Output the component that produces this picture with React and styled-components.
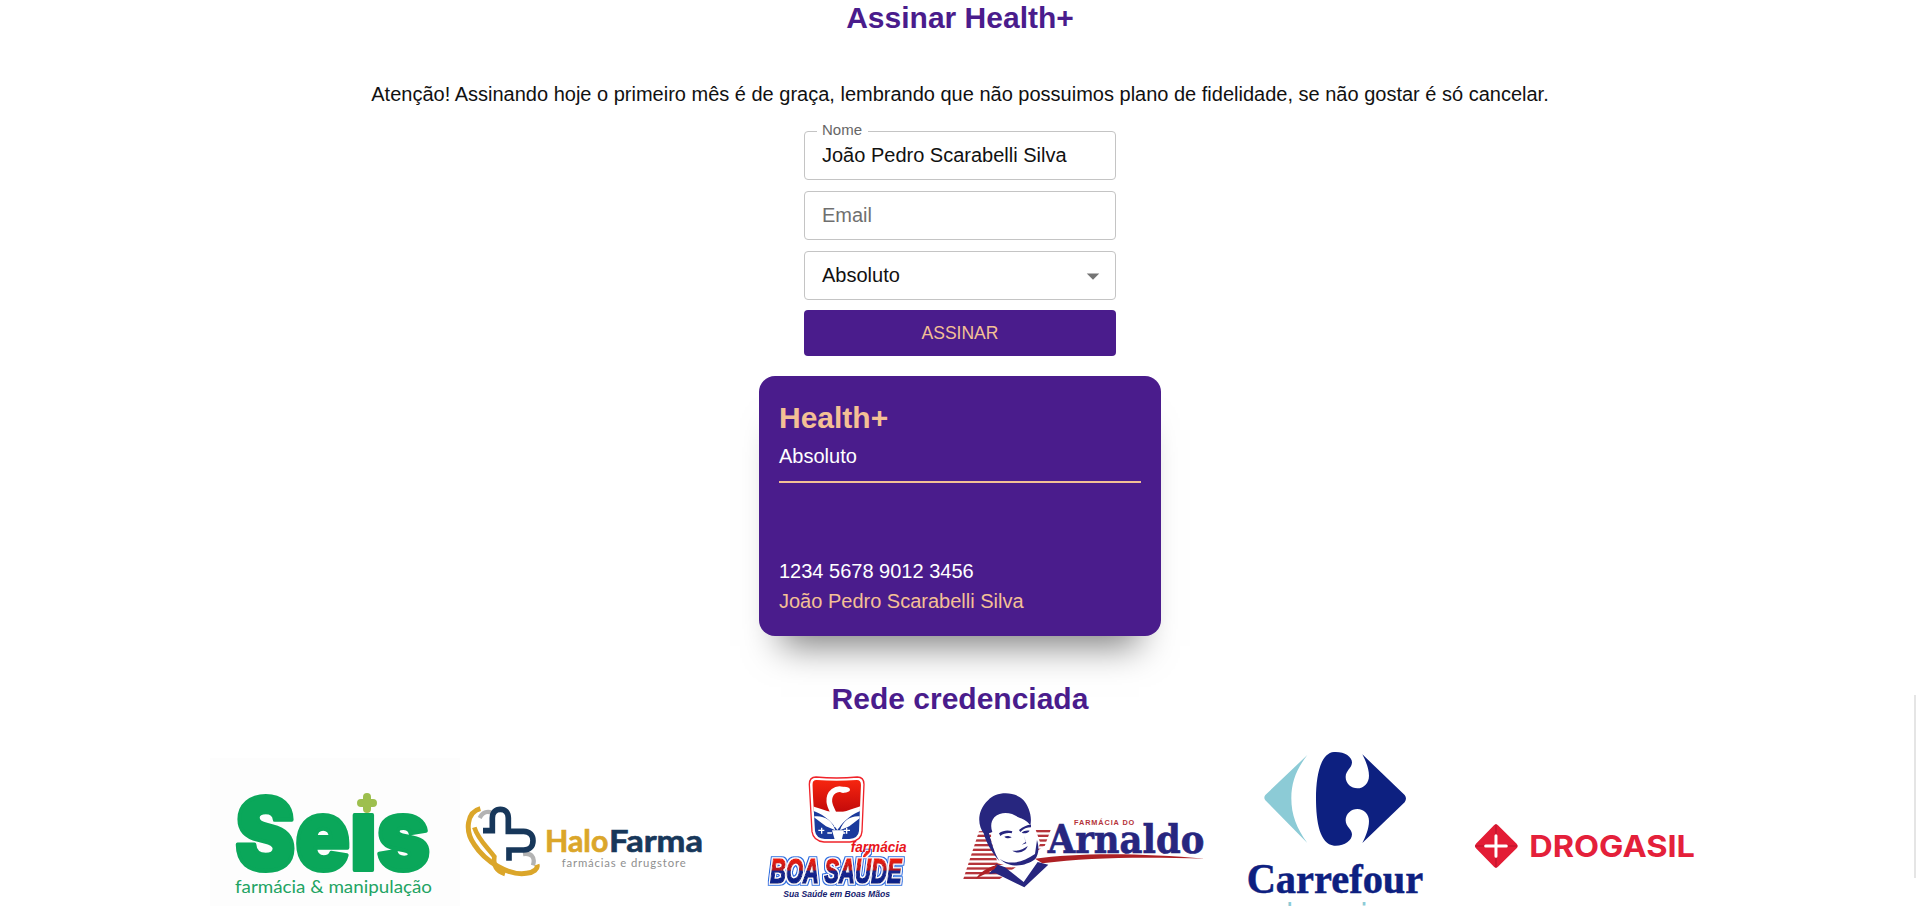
import React from "react";
import styled, { createGlobalStyle } from "styled-components";

const purple = "#4a1c8c";
const peach = "#f4c095";

const GlobalStyle = createGlobalStyle`
  html, body {
    margin: 0;
    height: 100%;
    overflow: hidden;
    background: #fff;
    font-family: "Liberation Sans", Arial, sans-serif;
    color: #111;
  }
`;

const Page = styled.main`
  display: flex;
  flex-direction: column;
  align-items: center;
  height: 906px;
  overflow: hidden;
`;

const Title = styled.h2`
  margin: ${(p) => p.$top || 0}px 0 0;
  font-size: 30px;
  line-height: 36px;
  font-weight: 700;
  color: ${purple};
`;

const Notice = styled.p`
  margin: 47px 0 0;
  font-size: 20px;
  line-height: 23px;
`;

const Form = styled.form`
  display: flex;
  flex-direction: column;
  gap: 11px;
  width: 312px;
  margin-top: 25px;
`;

const FieldBox = styled.div`
  position: relative;
  display: flex;
  align-items: center;
  justify-content: space-between;
  box-sizing: border-box;
  height: 49px;
  padding: 0 16px 0 17px;
  border: 1px solid #c4c4c4;
  border-radius: 4px;
  font-size: 20px;
`;

const FieldLabel = styled.label`
  position: absolute;
  top: -11px;
  left: 12px;
  padding: 0 6px 0 5px;
  background: #fff;
  font-size: 15px;
  line-height: 17px;
  color: #666;
`;

const Input = styled.input`
  width: 100%;
  padding: 0;
  border: 0;
  outline: 0;
  background: transparent;
  font: inherit;
  color: #111;

  &::placeholder {
    color: #6f6f6f;
    opacity: 1;
  }
`;

const DropIcon = styled.svg`
  flex: none;
  width: 30px;
  height: 30px;
  margin-right: -9px;
`;

const Submit = styled.button`
  height: 46px;
  margin-top: -1px;
  border: 0;
  border-radius: 4px;
  background: ${purple};
  color: ${peach};
  font-family: inherit;
  font-size: 17.5px;
  text-transform: uppercase;
`;

const Card = styled.section`
  display: flex;
  flex-direction: column;
  box-sizing: border-box;
  width: 402px;
  height: 260px;
  margin-top: 20px;
  padding: 25px 20px 23px;
  border-radius: 16px;
  background: ${purple};
  box-shadow: 0 32px 34px -22px rgba(0, 0, 0, 0.5);
`;

const CardBrand = styled.div`
  font-size: 30px;
  line-height: 34px;
  font-weight: 700;
  color: ${peach};
`;

const CardPlan = styled.div`
  margin-top: 10px;
  padding-bottom: 13px;
  border-bottom: 2px solid ${peach};
  font-size: 20px;
  line-height: 23px;
  color: #fff;
`;

const CardNumber = styled.div`
  margin-top: auto;
  font-size: 20px;
  line-height: 23px;
  color: #fff;
`;

const CardHolder = styled.div`
  margin-top: 7px;
  font-size: 20px;
  line-height: 23px;
  color: ${peach};
`;

const LogoRow = styled.div`
  display: flex;
  flex: none;
  width: 1500px;
  margin-top: 28px;
`;

const LogoArt = styled.svg`
  display: block;
  flex: none;
  width: 250px;
  height: 161px;
  overflow: hidden;
`;

const ScrollThumb = styled.div`
  position: fixed;
  top: 695px;
  right: 4px;
  width: 2px;
  height: 183px;
  background: #e5e5e5;
`;

const SeisLogo = () => (
  <LogoArt viewBox="0 0 250 161">
    <rect y="13" width="250" height="148" fill="#fdfdfd" />
    <text
      x="25"
      y="125"
      fontFamily="Inter, sans-serif"
      fontWeight="900"
      fontSize="100"
      textLength="195"
      lengthAdjust="spacingAndGlyphs"
      fill="#0aa75a"
      stroke="#0aa75a"
      strokeWidth="4"
      strokeLinejoin="round"
    >
      Seis
    </text>
    <rect x="140" y="40" width="34" height="26" fill="#fdfdfd" />
    <path d="M157 52v12M151 58h12" stroke="#9dbf4e" strokeWidth="8" strokeLinecap="round" />
    <text
      x="25"
      y="148"
      fontFamily="Lato, sans-serif"
      fontSize="18"
      textLength="197"
      lengthAdjust="spacingAndGlyphs"
      fill="#22a463"
    >
      farmácia &amp; manipulação
    </text>
  </LogoArt>
);

const HaloLogo = () => (
  <LogoArt viewBox="0 0 250 161">
    <g transform="translate(-5 45) scale(0.3333)">
      <path d="M74 84C82 68 96 62 110 68M204 192C228 188 242 200 234 226" fill="none" stroke="#b3b3b3" strokeWidth="13" />
      <path d="M76 56C36 66 28 122 58 164C90 214 160 258 214 250C236 248 250 236 246 224" fill="none" stroke="#dba62a" strokeWidth="15" />
      <path d="M58 112C70 150 98 172 118 200C114 228 124 244 150 252" fill="none" stroke="#dba62a" strokeWidth="14" />
      <path
        d="M84 122H112V84C112 66 122 58 136 58C150 58 160 66 160 84V124H206C224 124 234 136 234 152C234 168 224 180 206 180H162V212"
        fill="none"
        stroke="#17375a"
        strokeWidth="17"
      />
      <text x="270" y="185" fontFamily="Lato, sans-serif" fontWeight="700" fontSize="92" textLength="190" lengthAdjust="spacingAndGlyphs" fill="#dba62a" stroke="#dba62a" strokeWidth="2">
        Halo
      </text>
      <text x="462" y="185" fontFamily="Lato, sans-serif" fontWeight="700" fontSize="92" textLength="282" lengthAdjust="spacingAndGlyphs" fill="#17375a" stroke="#17375a" strokeWidth="2">
        Farma
      </text>
      <text x="320" y="232" fontFamily="Lato, sans-serif" fontSize="34" textLength="372" lengthAdjust="spacing" fill="#8f8f8f">
        farmácias e drugstore
      </text>
    </g>
  </LogoArt>
);

const BoaLogo = () => (
  <LogoArt viewBox="0 0 250 161">
    <defs>
      <linearGradient id="boaShield" x1="0" y1="0" x2="0" y2="1">
        <stop offset="0" stopColor="#ff2a10" />
        <stop offset="1" stopColor="#c40a0a" />
      </linearGradient>
      <linearGradient id="boaWord" gradientUnits="userSpaceOnUse" x1="0" y1="272" x2="0" y2="360">
        <stop offset="0.1" stopColor="#f0200c" />
        <stop offset="0.48" stopColor="#b5141e" />
        <stop offset="0.54" stopColor="#14268e" />
        <stop offset="1" stopColor="#0c1f86" />
      </linearGradient>
      <filter id="boaOutline" x="-5%" y="-15%" width="110%" height="130%">
        <feMorphology in="SourceAlpha" operator="dilate" radius="7" result="outer" />
        <feFlood floodColor="#2a6fe0" />
        <feComposite in2="outer" operator="in" result="blue" />
        <feMorphology in="SourceAlpha" operator="dilate" radius="3" result="inner" />
        <feFlood floodColor="#ffffff" />
        <feComposite in2="inner" operator="in" result="white" />
        <feMerge>
          <feMergeNode in="blue" />
          <feMergeNode in="white" />
          <feMergeNode in="SourceGraphic" />
        </feMerge>
      </filter>
      <clipPath id="boaInner">
        <path d="M200 45Q260 50 320 45Q333 45 333 60L327 198Q325 220 298 222L224 222Q198 220 195 198L187 60Q187 45 200 45Z" />
      </clipPath>
    </defs>
    <g transform="translate(40 20) scale(0.3333)">
      <path d="M198 36Q260 42 322 36Q342 36 342 58L336 200Q334 228 300 231L222 231Q190 228 186 200L178 58Q178 36 198 36Z" fill="#fff" stroke="#f0232a" strokeWidth="4" />
      <g clipPath="url(#boaInner)">
        <rect x="170" y="30" width="180" height="110" fill="url(#boaShield)" />
        <path d="M170 118C210 130 230 140 262 145C290 140 310 130 350 118V230H170Z" fill="#fff" />
        <path d="M170 132C205 140 235 155 262 195C290 155 320 140 350 132V230H170Z" fill="#1b3a9c" />
        <path d="M190 155C220 150 246 165 256 196L228 184ZM335 155C305 150 280 165 270 196L298 184Z" fill="#fff" />
        <path d="M246 196H282L274 230H256Z" fill="#fff" />
        <path d="M205 196h18M215 188v18M232 204h14M300 196h-18M290 188v18M272 204h14" stroke="#fff" strokeWidth="4" />
      </g>
      <path d="M284 76C258 64 236 84 238 110C240 134 262 150 260 186" fill="none" stroke="#fff" strokeWidth="17" />
      <ellipse cx="282" cy="74" rx="18" ry="9" fill="#fff" />
      <text
        x="60"
        y="353"
        fontFamily="Liberation Sans, sans-serif"
        fontWeight="700"
        fontStyle="italic"
        fontSize="108"
        textLength="395"
        lengthAdjust="spacingAndGlyphs"
        fill="url(#boaWord)"
        stroke="url(#boaWord)"
        strokeWidth="5"
        filter="url(#boaOutline)"
      >
        BOA SAÚDE
      </text>
      <text x="302" y="262" fontFamily="Liberation Sans, sans-serif" fontWeight="700" fontStyle="italic" fontSize="42" textLength="168" lengthAdjust="spacingAndGlyphs" fill="#e8141c">
        farmácia
      </text>
      <text x="100" y="395" fontFamily="Liberation Sans, sans-serif" fontWeight="700" fontStyle="italic" fontSize="26" textLength="320" lengthAdjust="spacingAndGlyphs" fill="#14206e">
        Sua Saúde em Boas Mãos
      </text>
    </g>
  </LogoArt>
);

const stripeRows = [150, 164, 178, 192, 206, 220, 234, 248, 262, 276, 290];

const ArnaldoLogo = () => (
  <LogoArt viewBox="0 0 250 161">
    <defs>
      <clipPath id="arnaldoStripes">
        <path d="M72 154L290 142L270 196L130 300L24 300Z" />
      </clipPath>
    </defs>
    <g transform="translate(-5 35) scale(0.3333)">
      <g clipPath="url(#arnaldoStripes)" fill="#b5343a">
        {stripeRows.map((y) => (
          <rect key={y} x="20" y={y} width="280" height="7" />
        ))}
      </g>
      <path d="M110 70L232 120L256 190L236 232L170 262L128 250L108 180Z" fill="#fff" />
      <path
        d="M100 60C120 36 175 30 205 60C222 80 232 110 226 136C214 120 204 118 190 112C170 98 140 92 118 112C108 124 106 140 112 156L102 160C110 190 118 220 134 244C112 220 94 190 86 160C70 140 62 95 100 60Z"
        fill="#27267f"
      />
      <path d="M132 160C145 150 160 150 172 154L170 160C158 158 146 160 136 168ZM192 150C204 140 216 134 228 134L228 142C216 142 206 146 196 156ZM148 170C155 166 165 168 170 172C162 176 154 176 148 170ZM200 158C206 152 216 150 224 152C218 160 208 162 200 158ZM206 166L214 190L200 194L212 186ZM172 212C190 214 205 208 218 198C214 214 190 224 172 212Z" fill="#27267f" />
      <path d="M134 236C160 256 200 250 240 222L246 180C254 205 250 225 240 238C215 256 170 270 134 236Z" fill="#27267f" />
      <path d="M124 252L150 262L206 306L248 246L280 254L208 322L122 280L102 282Z" fill="#27267f" />
      <path d="M62 296C80 270 110 258 128 254L118 268ZM240 236C360 218 560 218 750 236C560 230 400 232 262 250Z" fill="#ad2024" />
      <text x="357" y="136" fontFamily="Liberation Sans, sans-serif" fontWeight="700" fontSize="22" textLength="181" lengthAdjust="spacing" fill="#b5343a">
        FARMÁCIA DO
      </text>
      <text x="278" y="218" fontFamily="DejaVu Serif, serif" fontWeight="700" fontSize="116" textLength="470" lengthAdjust="spacingAndGlyphs" fill="#27267f" stroke="#27267f" strokeWidth="2">
        Arnaldo
      </text>
    </g>
  </LogoArt>
);

const CarrefourLogo = () => (
  <LogoArt viewBox="0 0 250 161">
    <g transform="translate(30 0) scale(0.3333)">
      <path d="M202 30L76 150Q70 158 76 166L202 294C170 250 154 210 154 160C154 110 170 72 202 30Z" fill="#8ccbd6" />
      <path
        d="M282 21C242 24 228 90 228 160C228 232 240 298 282 302C312 304 336 288 336 268C336 252 317 246 317 226C317 206 334 192 352 192C372 192 387 208 387 228C387 252 376 276 367 294L494 172Q502 160 494 150L367 28C376 46 387 70 387 92C387 114 372 130 352 130C334 130 317 116 317 96C317 76 336 70 336 52C336 34 312 19 282 21Z"
        fill="#0d2080"
      />
      <text x="20" y="445" fontFamily="Liberation Serif, serif" fontWeight="700" fontSize="124" textLength="530" lengthAdjust="spacingAndGlyphs" fill="#0d2080" stroke="#0d2080" strokeWidth="1.5">
        Carrefour
      </text>
      <text x="110" y="562" fontFamily="Liberation Sans, sans-serif" fontSize="120" textLength="320" lengthAdjust="spacingAndGlyphs" fill="#8ccbd6">
        drogaria
      </text>
    </g>
  </LogoArt>
);

const DrogasilLogo = () => (
  <LogoArt viewBox="0 0 250 161">
    <g transform="translate(-220 0) scale(0.3333)">
      <path d="M762 241Q768 235 774 241L830 296Q836 303 830 310L774 365Q768 371 762 365L708 310Q702 303 708 296Z" fill="#e31c35" />
      <path d="M705 303H832M768 238V368" stroke="#b5122a" strokeWidth="3" />
      <path d="M768 272V334M737 303H799" stroke="#fff" strokeWidth="9" strokeLinecap="round" />
      <text x="868" y="335" fontFamily="Inter, sans-serif" fontWeight="700" fontSize="90" textLength="497" lengthAdjust="spacingAndGlyphs" fill="#e4203a">
        DROGASIL
      </text>
    </g>
  </LogoArt>
);

export default function App() {
  return (
    <>
      <GlobalStyle />
      <Page>
        <Title>Assinar Health+</Title>
        <Notice>
          Atenção! Assinando hoje o primeiro mês é de graça, lembrando que não possuimos plano de fidelidade, se não gostar é só cancelar.
        </Notice>
        <Form>
          <FieldBox>
            <FieldLabel htmlFor="nome">Nome</FieldLabel>
            <Input id="nome" value="João Pedro Scarabelli Silva" readOnly />
          </FieldBox>
          <FieldBox>
            <Input placeholder="Email" readOnly />
          </FieldBox>
          <FieldBox>
            Absoluto
            <DropIcon viewBox="0 0 24 24">
              <path d="M7 10l5 5 5-5z" fill="#757575" />
            </DropIcon>
          </FieldBox>
          <Submit type="button">Assinar</Submit>
        </Form>
        <Card>
          <CardBrand>Health+</CardBrand>
          <CardPlan>Absoluto</CardPlan>
          <CardNumber>1234 5678 9012 3456</CardNumber>
          <CardHolder>João Pedro Scarabelli Silva</CardHolder>
        </Card>
        <Title $top={45}>Rede credenciada</Title>
        <LogoRow>
          <SeisLogo />
          <HaloLogo />
          <BoaLogo />
          <ArnaldoLogo />
          <CarrefourLogo />
          <DrogasilLogo />
        </LogoRow>
        <ScrollThumb />
      </Page>
    </>
  );
}
